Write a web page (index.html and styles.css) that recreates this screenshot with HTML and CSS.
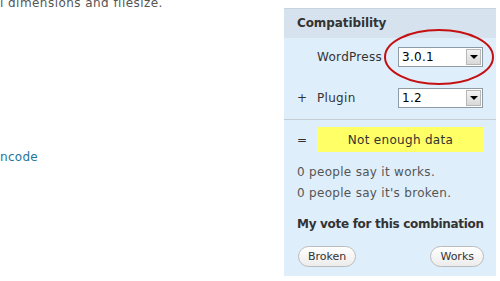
FILE: index.html
```html
<!DOCTYPE html>
<html>
<head>
<meta charset="utf-8">
<link rel="stylesheet" href="styles.css">
</head>
<body>
<div class="page">
  <div class="content">
    <p class="intro">l dimensions and filesize.</p>
    <a class="link" href="#">ncode</a>
  </div>
  <div class="sidebar">
    <div class="head">Compatibility</div>
    <div class="body">
      <div class="pick">
        <span class="op"></span>
        <span class="label">WordPress</span>
        <div class="select"><span class="val">3.0.1</span><span class="arrow"></span></div>
      </div>
      <div class="pick second">
        <span class="op">+</span>
        <span class="label">Plugin</span>
        <div class="select"><span class="val">1.2</span><span class="arrow"></span></div>
      </div>
    </div>
    <div class="result">
      <div class="pick">
        <span class="op">=</span>
        <div class="verdict">Not enough data</div>
      </div>
      <p class="stat first">0 people say it works.</p>
      <p class="stat">0 people say it's broken.</p>
      <p class="vote">My vote for this combination</p>
      <div class="buttons">
        <button class="btn">Broken</button>
        <button class="btn">Works</button>
      </div>
    </div>
    <svg class="ring" width="112" height="58" viewBox="0 0 112 58">
      <ellipse cx="56" cy="29" rx="54" ry="27" fill="none" stroke="#c41010" stroke-width="2"/>
    </svg>
  </div>
</div>
</body>
</html>
```
FILE: styles.css
```css
html, body {
  margin: 0;
  padding: 0;
  background: #fff;
}
body {
  font-family: "DejaVu Sans", Verdana, sans-serif;
  font-size: 12px;
  color: #333;
}
.page {
  display: flex;
  width: 500px;
  height: 281px;
  overflow: hidden;
}
.content {
  width: 284px;
  flex: none;
}
.intro {
  margin: -5px 0 0 0;
  color: #555;
  font-size: 12px;
  line-height: 16px;
  letter-spacing: 0.45px;
}
.link {
  display: block;
  margin-top: 138px;
  color: #21759b;
  text-decoration: none;
  line-height: 16px;
  letter-spacing: 0.3px;
}
.sidebar {
  position: relative;
  width: 212px;
  flex: none;
  margin-top: 8px;
  height: 267px;
  background: #dfeefb;
  border-top: 1px solid #c8d3dc;
}
.head {
  height: 29px;
  line-height: 28px;
  background: #d6e3ee;
  padding-left: 13px;
  font-weight: bold;
  color: #333;
  letter-spacing: -0.1px;
}
.body {
  padding: 9px 0 11px 13px;
  border-bottom: 1px solid #c6ccd1;
  letter-spacing: 0.3px;
}
.pick {
  display: flex;
  align-items: center;
  height: 20px;
}
.pick.second {
  margin-top: 21px;
}
.op {
  width: 20px;
  flex: none;
}
.label {
  width: 81px;
  flex: none;
}
.select {
  display: flex;
  width: 83px;
  height: 18px;
  border: 1px solid #8e9aa4;
  background: #fff;
  color: #000;
}
.val {
  flex: 1;
  padding-left: 3px;
  line-height: 18px;
}
.arrow {
  width: 15px;
  height: 16px;
  margin: 1px;
  border: 1px solid #b7b7b7;
  box-sizing: border-box;
  background: linear-gradient(#f4f4f4, #d8d8d8);
  display: flex;
  align-items: center;
  justify-content: center;
}
.arrow::after {
  content: "";
  width: 0;
  height: 0;
  border-left: 4px solid transparent;
  border-right: 4px solid transparent;
  border-top: 4px solid #000;
}
.result {
  padding: 7px 0 0 13px;
}
.result .pick {
  height: 25px;
}
.verdict {
  width: 167px;
  height: 25px;
  line-height: 26px;
  text-align: center;
  background: #ffff66;
  color: #333;
  letter-spacing: 0.3px;
}
.stat {
  margin: 0;
  line-height: 21px;
  color: #555;
  letter-spacing: 0.3px;
}
.stat.first {
  margin-top: 10px;
}
.vote {
  margin: 10px 0 0 0;
  font-weight: bold;
  line-height: 20px;
  color: #333;
  letter-spacing: -0.3px;
}
.buttons {
  display: flex;
  justify-content: space-between;
  width: 186px;
  margin-top: 12px;
  padding-left: 1px;
}
.btn {
  font-family: "DejaVu Sans", Verdana, sans-serif;
  font-size: 11px;
  color: #333;
  height: 21px;
  padding: 0 9px;
  border: 1px solid #bbb;
  border-radius: 11px;
  background: linear-gradient(#fff, #ececec);
}
.ring {
  position: absolute;
  left: 99px;
  top: 19px;
}
```
